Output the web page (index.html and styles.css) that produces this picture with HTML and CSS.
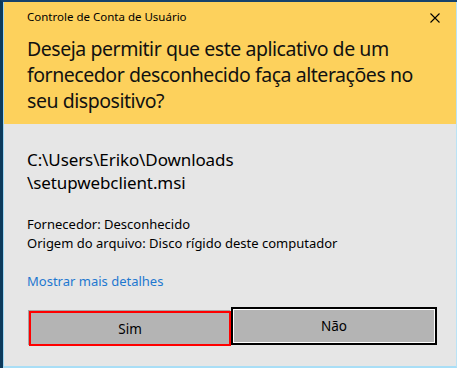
FILE: index.html
```html
<!DOCTYPE html>
<html lang="pt-BR">
<head>
    <meta charset="UTF-8">
    <title>Controle de Conta de Usuário</title>
    <link rel="stylesheet" href="styles.css">
</head>
<body>
    <div class="frame">
        <div class="dialog">
            <div class="header">
                <div class="title-row">
                    <span class="title">Controle de Conta de Usuário</span>
                    <svg class="close" width="10" height="10" viewBox="0 0 10 10">
                        <path d="M0.5 0.5 L9.5 9.5 M9.5 0.5 L0.5 9.5" stroke="#000" stroke-width="1.1" fill="none"/>
                    </svg>
                </div>
                <h1 class="question">Deseja permitir que este aplicativo de um fornecedor desconhecido faça alterações no seu dispositivo?</h1>
            </div>
            <div class="content">
                <div class="path">C:\Users\Eriko\Downloads<br>\setupwebclient.msi</div>
                <div class="details">
                    <div>Fornecedor: Desconhecido</div>
                    <div>Origem do arquivo: Disco rígido deste computador</div>
                </div>
                <a class="more" href="#">Mostrar mais detalhes</a>
                <div class="buttons">
                    <button class="btn yes">Sim</button>
                    <button class="btn no">Não</button>
                </div>
            </div>
        </div>
    </div>
</body>
</html>
```
FILE: styles.css
```css
body {
    margin: 0;
    font-family: "Noto Sans", "Open Sans", sans-serif;
    color: #000;
    overflow: hidden;
}
.frame {
    width: 457px;
    height: 368px;
    box-sizing: border-box;
    border-left: 3px solid #0c3a5c;
    border-top: 2px solid #16426c;
}
.dialog {
    height: 100%;
    box-sizing: border-box;
    border-left: 1px solid #9ed7f3;
    border-right: 1px solid #b9e3f6;
    border-bottom: 2px solid #a9def6;
    background-color: #e6e6e6;
    display: flex;
    flex-direction: column;
}
.header {
    background-color: #fdd15c;
    height: 122px;
    box-sizing: border-box;
    padding: 7px 0 0 23px;
}
.title-row {
    display: flex;
    align-items: center;
    height: 16px;
    padding-right: 16px;
}
.title {
    flex: 1;
    font-size: 11.5px;
    line-height: 16px;
}
.close {
    margin-top: 2px;
}
.question {
    margin: 11px 0 0 0;
    font-size: 19.5px;
    letter-spacing: -0.45px;
    font-weight: normal;
    line-height: 26px;
    width: 420px;
    color: #111;
}
.content {
    padding: 24px 18px 0 23px;
}
.path {
    font-size: 17px;
    letter-spacing: -0.1px;
    line-height: 23px;
}
.details {
    margin-top: 21px;
    font-size: 13px;
    line-height: 19px;
}
.more {
    display: inline-block;
    margin-top: 19px;
    font-size: 13px;
    line-height: 19px;
    color: #1e78d0;
    text-decoration: none;
}
.buttons {
    display: flex;
    margin-top: 16px;
    margin-left: 2px;
}
.btn {
    font-family: inherit;
    font-size: 13.5px;
    color: #000;
    background-color: #b4b4b4;
    padding: 0;
    width: 202px;
    margin: 0;
}
.btn.yes {
    height: 35px;
    margin-top: 4px;
    border: 2px solid #ff0000;
    box-shadow: -1px -1px 0 #a4a4a4;
}
.btn.no {
    width: 206px;
    height: 38px;
    border: 2px solid #000;
    box-shadow: inset 0 0 0 1px #fff;
}
```
